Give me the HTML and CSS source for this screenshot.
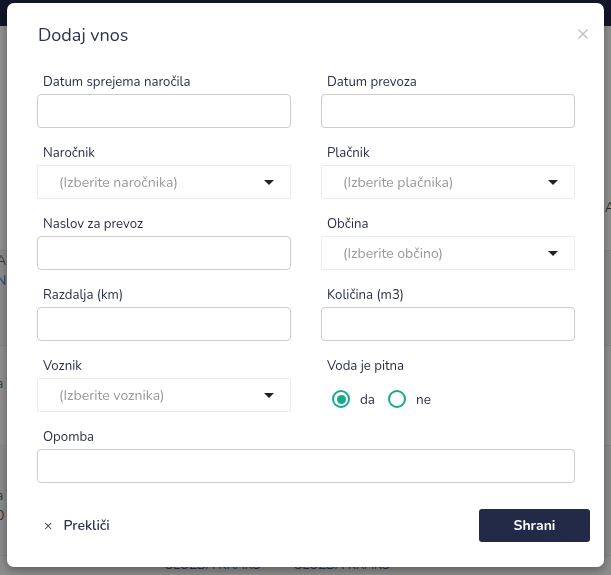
FILE: index.html
```html
<!DOCTYPE html>
<html lang="sl">
<head>
<meta charset="utf-8">
<title>Dodaj vnos</title>
<link rel="stylesheet" href="styles.css">
</head>
<body>
<div class="page">
  <div class="topbar"></div>
  <div class="bg-row bg-row-a"><span class="bg-right">A</span></div>
  <div class="bg-row bg-row-b"><span class="bg-left">A,<br><span class="bg-blue">N</span></span></div>
  <div class="bg-row bg-row-c"><span class="bg-left">a</span></div>
  <div class="bg-row bg-row-d"><span class="bg-left">a<br>0</span></div>
  <div class="bg-foot"><span>SLUŽBA KRAKS</span><span>SLUŽBA KRAKS</span></div>
</div>

<div class="modal">
  <div class="modal-head">
    <h1 class="modal-title">Dodaj vnos</h1>
    <span class="modal-close">
      <svg width="10" height="10" viewBox="0 0 10 10"><path d="M0.5 0.5 L9.5 9.5 M9.5 0.5 L0.5 9.5" stroke="#bdbdbd" stroke-width="1.3" fill="none"/></svg>
    </span>
  </div>

  <form class="form">
    <div class="field">
      <label class="label">Datum sprejema naročila</label>
      <div class="input"></div>
    </div>
    <div class="field">
      <label class="label">Datum prevoza</label>
      <div class="input"></div>
    </div>

    <div class="field">
      <label class="label">Naročnik</label>
      <div class="select"><span class="placeholder">(Izberite naročnika)</span><span class="caret"></span></div>
    </div>
    <div class="field">
      <label class="label">Plačnik</label>
      <div class="select"><span class="placeholder">(Izberite plačnika)</span><span class="caret"></span></div>
    </div>

    <div class="field">
      <label class="label">Naslov za prevoz</label>
      <div class="input"></div>
    </div>
    <div class="field">
      <label class="label">Občina</label>
      <div class="select"><span class="placeholder">(Izberite občino)</span><span class="caret"></span></div>
    </div>

    <div class="field">
      <label class="label">Razdalja (km)</label>
      <div class="input"></div>
    </div>
    <div class="field">
      <label class="label">Količina (m3)</label>
      <div class="input"></div>
    </div>

    <div class="field">
      <label class="label">Voznik</label>
      <div class="select"><span class="placeholder">(Izberite voznika)</span><span class="caret"></span></div>
    </div>
    <div class="field">
      <label class="label">Voda je pitna</label>
      <div class="radios">
        <span class="radio checked"></span><span class="radio-text">da</span>
        <span class="radio"></span><span class="radio-text">ne</span>
      </div>
    </div>

    <div class="field field-wide">
      <label class="label">Opomba</label>
      <div class="input"></div>
    </div>
  </form>

  <div class="modal-foot">
    <span class="cancel"><span class="cancel-x">×</span>Prekliči</span>
    <span class="save">Shrani</span>
  </div>
</div>
</body>
</html>
```

FILE: styles.css
```css
* { box-sizing: border-box; }
html, body { margin: 0; padding: 0; }
body {
  width: 611px;
  height: 575px;
  overflow: hidden;
  background: #8d8d8d;
  font-family: "Nunito", "Lato", "Open Sans", sans-serif;
  color: #2c3048;
}
.page { position: relative; height: 575px; }
.topbar { height: 26px; background: #13162a; }
.bg-row {
  position: relative;
  border-bottom: 1px solid #858585;
  font-size: 14px;
  color: #3a3a3a;
}
.bg-row-a { height: 225px; background: #909090; }
.bg-row-b { height: 95px; background: #8b8b8b; }
.bg-row-c { height: 100px; background: #8f8f8f; }
.bg-row-d { height: 110px; background: #8b8b8b; }
.bg-left { position: absolute; left: -4px; line-height: 20px; }
.bg-row-b .bg-left { top: 0; }
.bg-row-c .bg-left { top: 28px; }
.bg-row-d .bg-left { top: 40px; }
.bg-blue { color: #1f4a7a; }
.bg-right { position: absolute; right: -4px; top: 172px; color: #2b2b2b; }
.bg-foot {
  display: flex;
  gap: 34px;
  padding-left: 165px;
  font-size: 13px;
  color: #2f3350;
  line-height: 18px;
}

.modal {
  position: fixed;
  left: 7px;
  top: 3px;
  width: 597px;
  height: 564px;
  background: #fff;
  border-radius: 7px;
  box-shadow: 0 3px 10px rgba(0, 0, 0, 0.35);
  padding: 20px 29px 26px 30px;
}
.modal-head {
  display: flex;
  justify-content: space-between;
  align-items: center;
  height: 24px;
  margin-right: -13px;
}
.modal-title {
  margin: 0;
  font-size: 18px;
  font-weight: 400;
  line-height: 24px;
  color: #2c3150;
  padding-left: 1px;
}
.modal-close { display: flex; width: 10px; height: 10px; margin-top: -3px; }

.form {
  margin-top: 25px;
  display: grid;
  grid-template-columns: 254px 254px;
  column-gap: 30px;
  row-gap: 15px;
}
.field { display: flex; flex-direction: column; }
.field-wide { grid-column: 1 / span 2; }
.label {
  font-size: 13.2px;
  line-height: 20px;
  padding-left: 6px;
  margin-bottom: 2px;
  color: #2c3048;
}
.input {
  height: 34px;
  border: 1px solid #cdcdcd;
  border-radius: 4px;
  background: #fff;
}
.select {
  height: 34px;
  border: 1px solid #ececec;
  border-radius: 2px;
  display: flex;
  align-items: center;
  justify-content: space-between;
  padding: 0 16px 0 21px;
}
.placeholder { font-size: 14px; color: #9a9a9a; }
.caret {
  width: 0;
  height: 0;
  border-left: 5px solid transparent;
  border-right: 5px solid transparent;
  border-top: 5px solid #222;
}
.radios {
  height: 34px;
  display: flex;
  align-items: center;
  padding-left: 11px;
  padding-top: 8px;
}
.radio {
  width: 18px;
  height: 18px;
  border: 2px solid #15aa8c;
  border-radius: 50%;
  display: flex;
  align-items: center;
  justify-content: center;
}
.radio.checked::after {
  content: "";
  width: 9px;
  height: 9px;
  border-radius: 50%;
  background: #15aa8c;
}
.radio-text {
  font-size: 13.5px;
  color: #2c3048;
  margin-left: 10px;
  margin-right: 13px;
}

.modal-foot {
  margin-top: 26px;
  margin-right: -15px;
  display: flex;
  justify-content: space-between;
  align-items: center;
}
.cancel {
  display: flex;
  align-items: center;
  padding-left: 7px;
  font-size: 14px;
  font-weight: 600;
  color: #2c3150;
}
.cancel-x { font-weight: 400; font-size: 14px; margin-right: 11px; color: #2c3048; }
.save {
  width: 111px;
  height: 33px;
  background: #222a47;
  border-radius: 3px;
  color: #fff;
  font-size: 14px;
  font-weight: 700;
  display: flex;
  align-items: center;
  justify-content: center;
}
```
